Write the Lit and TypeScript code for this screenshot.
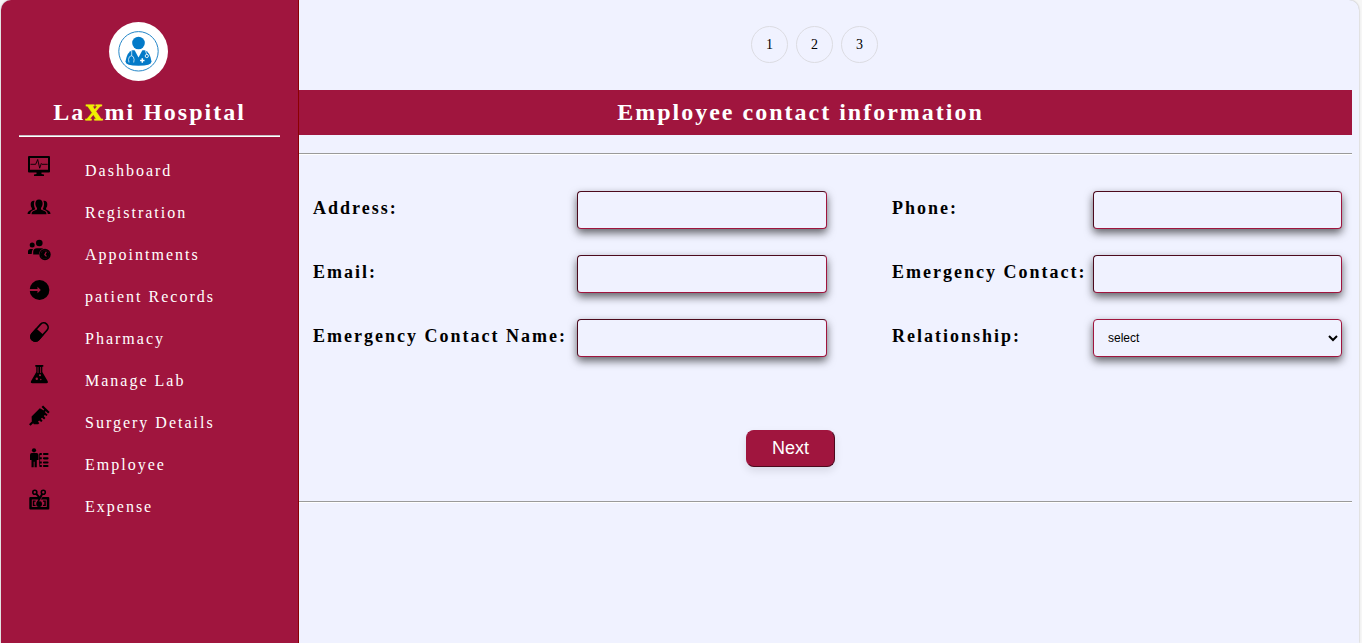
import { LitElement, html, svg, css } from "lit";
import { customElement, property } from "lit/decorators.js";

const icons: Record<string, unknown> = {
  dashboard: svg`<path fill-rule="evenodd" d="M2 2h20q1 0 1 1v14.500q0 1-1 1H2q-1 0-1-1V3q0-1 1-1zM3 4v11.800h18V4z"/><path d="M9.500 18h5v2l2.500.5V22H7v-1.500l2.500-.5z"/><path d="M3.500 10.300h5.200l2-4.800 2 8.700 1.600-4.700.8.800h5.600" fill="none" stroke="#000" stroke-width=".9"/>`,
  registration: svg`<path d="M12 3.500c2.600 0 3.800 1.800 3.600 4.500-.1 1.700-1 3.200-1.600 4v1.600l4 1.700q1.500.7 1.500 2.900h-15q0-2.200 1.500-2.900l4-1.700V12c-.6-.8-1.500-2.300-1.600-4C8.200 5.300 9.400 3.500 12 3.500z"/><path d="M7.600 4.800C5 4.400 3.500 6 3.700 8.600c.1 1.500.2 2.400 1.200 3.500v1.400L2 15q-1.500.8-1.500 3h2.700q.2-2.600 1.800-3.300l3.300-1.500C7.200 11 6.200 7.800 7.600 4.800zM16.400 4.800c2.600-.4 4.100 1.200 3.900 3.800-.1 1.500-.2 2.400-1.200 3.500v1.400L22 15q1.500.8 1.500 3h-2.700q-.2-2.600-1.800-3.300l-3.300-1.500c1.100-2.200 2.100-5.400.7-8.400z"/>`,
  appointments: svg`<circle cx="12.300" cy="5" r="3.300"/><circle cx="5.200" cy="7" r="2.500"/><path d="M1 16v-2.200Q1 11 3.600 11H6q-1.500 2-1.300 5zM6.200 16.500V14q0-3.800 3.800-3.800h4.500q1.200 0 2 .5-4.500 1.300-4.500 5.800z"/><circle cx="18" cy="16.500" r="4.900" fill="none" stroke="#000" stroke-width="1.600"/><circle cx="18" cy="16.500" r="4.300"/><path d="M19.300 13.800l-1.500 2.900 1.700 1.700" fill="none" stroke="#a0153e" stroke-width="1.200"/>`,
  records: svg`<g transform="translate(0 -2)"><circle cx="12.500" cy="12" r="9.900"/><path d="M2 11h8.500V8.700L13.800 12l-3.300 3.300V13H2z" fill="#a0153e"/></g>`,
  pharmacy: svg`<g transform="translate(.5 -2) rotate(42 12 12)"><rect x="7.600" y="1.300" width="8.800" height="21.400" rx="4.400" fill="none" stroke="#000" stroke-width="1.700"/><path d="M6.800 11.500h10.400v6.800a5.200 5.200 0 0 1-10.400 0z"/></g>`,
  lab: svg`<g transform="translate(.3 -2)"><path d="M8 3h8v1.700h-1V10l5.300 9q1 2.200-1.200 2.200H5q-2.200 0-1.200-2.200L9 10V4.700H8z"/><path d="M10.700 5v6M13.300 5v6" stroke="#a0153e" stroke-width=".8"/><circle cx="12.700" cy="13.300" r="1" fill="#a0153e"/><circle cx="9.500" cy="16.800" r="1.200" fill="#a0153e"/><circle cx="13.500" cy="17.500" r=".7" fill="#a0153e"/></g>`,
  surgery: svg`<g transform="translate(.3 -2.500)"><path d="M4.500 17.500L4.300 13l8.200-8.200 2.800 1.400 5 5-1 1.400-1.700-1-1.200 1 1.700 2-1.300 1.300-2-1.600-1.200 1 1.700 2-1.400 1.200-2-1.500-1.200 1 1.300 1.800-1.200 1H6.500z"/><path d="M6.500 17.500l-4 4M15.500 9l3.300-3.300M15 2.700l6.600 6.600" stroke="#000" stroke-width="2.200"/></g>`,
  employee: svg`<g transform="translate(0 -2.500)"><circle cx="7" cy="4.800" r="2.100"/><path d="M4.800 7.500h4.700q2 0 2 2v5H9.800v7.200H7.600v-5.500h-.9v5.500H4.500v-7.200H3V9.500q0-2 1.800-2z"/><path d="M12.500 8.500h2.300M12.500 12.800h2.300M12.500 17h2.300M12.500 20.500h2.300" stroke="#000" stroke-width="2"/><path d="M17 8.500h3.500M17 12.800h3.500M17 17h3.500M17 20.500h3.500" stroke="#000" stroke-width="2.200" stroke-linecap="round"/><path d="M12.600 8.500V20" stroke="#000" stroke-width=".8"/></g>`,
  expense: svg`<g transform="translate(.3 -3)"><path fill-rule="evenodd" d="M3 10h18q1 0 1 1v10.500q0 1-1 1H3q-1 0-1-1V11q0-1 1-1zM4.500 12.400v7.700h15v-7.700z"/><path d="M5.500 13.500h2.800v1.200H7v3h1.300v1.200H5.500zM18.500 13.500h-2.800v1.200H17v3h-1.300v1.200h2.800z"/><circle cx="11.800" cy="17" r="2.900"/><circle cx="7.500" cy="5.200" r="2" fill="none" stroke="#000" stroke-width="1.600"/><circle cx="16" cy="5.200" r="2" fill="none" stroke="#000" stroke-width="1.600"/><path d="M14.800 7l-4.500 9M9 6.800l3 3.500" stroke="#000" stroke-width="2"/><path d="M14.800 10L12 14.500" stroke="#a0153e" stroke-width=".7"/></g>`,
};

@customElement("app-sidebar")
class AppSidebar extends LitElement {
  static styles = css`
    :host {
      display: block;
      flex: none;
      box-sizing: border-box;
      width: 298px;
      padding: 21px 18px 0;
      background: #a0153e;
      border-right: 1px solid #8b0000;
      border-radius: 10px 0 0 0;
      color: #fff;
    }
    .logo {
      display: block;
      width: 60px;
      height: 60px;
      margin: 0 0 0 89px;
    }
    .brand {
      margin: 17px 0 9px;
      font-size: 24px;
      line-height: 28px;
      letter-spacing: 2px;
      text-align: center;
    }
    .accent { color: #f0f000; -webkit-text-stroke: 1px #f0f000; }
    .rule { margin: 0; border: solid; border-width: 1px 0; border-color: #c9c0c4 transparent #fff; }
    .menu {
      display: grid;
      gap: 18px;
      margin: 17px 0 0;
      padding: 0 0 0 8px;
      list-style: none;
    }
    .link {
      display: flex;
      gap: 34px;
      height: 24px;
      color: #fff;
      font-size: 16px;
      line-height: 34px;
      letter-spacing: 2px;
      text-decoration: none;
    }
    .icon { width: 24px; height: 24px; }
  `;

  items = [
    ["dashboard", "Dashboard"],
    ["registration", "Registration"],
    ["appointments", "Appointments"],
    ["records", "patient Records"],
    ["pharmacy", "Pharmacy"],
    ["lab", "Manage Lab"],
    ["surgery", "Surgery Details"],
    ["employee", "Employee"],
    ["expense", "Expense"],
  ];

  render() {
    return html`
      <svg class="logo" viewBox="0 0 60 60" aria-hidden="true">
        <circle cx="30.500" cy="30.500" r="29.500" fill="#fff" />
        <circle cx="30.500" cy="30.300" r="19.700" fill="none" stroke="#2486c8" stroke-width="1" />
        <circle cx="30.500" cy="22" r="6.300" fill="#037ac8" />
        <path fill="#037ac8" d="M24.500 29.300h12q5.500 1.500 7 11.200 0 4.300-13 4.300t-13-4.300q1.500-9.700 7-11.200z" />
        <path fill="#fff" d="M26.500 29h8l-4 7.500z" />
        <path fill="none" stroke="#fff" stroke-width=".7" d="M23.700 30v5M21 41.500l-.5-3q.3-3.500 2.800-3.700 2.700.2 2.800 3.700l-.4 3M37.500 30l1.300 3.500" />
        <circle cx="38.800" cy="35" r="1.600" fill="none" stroke="#fff" stroke-width=".9" />
        <path d="M34.300 37.300v4.400M32.100 39.500h4.400" stroke="#fff" stroke-width="1.500" />
      </svg>
      <h1 class="brand">La<span class="accent">X</span>mi Hospital</h1>
      <hr class="rule" />
      <nav aria-label="Main">
        <ul class="menu">
          ${this.items.map(
            ([icon, label]) => html`<li>
              <a class="link" href="#${icon}">
                <svg class="icon" viewBox="0 0 24 24" overflow="visible" aria-hidden="true">${icons[icon]}</svg>
                <span>${label}</span>
              </a>
            </li>`
          )}
        </ul>
      </nav>
    `;
  }
}

@customElement("step-list")
class StepList extends LitElement {
  static styles = css`
    :host { display: block; }
    .steps {
      display: flex;
      justify-content: center;
      gap: 8px;
      margin: 0;
      padding: 0 22px 0 0;
      list-style: none;
    }
    .step {
      box-sizing: border-box;
      width: 37px;
      height: 37px;
      border: 1px solid #dcdce2;
      border-radius: 50%;
      font-size: 14px;
      line-height: 35px;
      text-align: center;
    }
  `;

  @property({ type: Number }) count = 3;

  render() {
    return html`<ol class="steps">
      ${Array.from({ length: this.count }, (_, i) => html`<li class="step">${i + 1}</li>`)}
    </ol>`;
  }
}

@customElement("contact-form")
class ContactForm extends LitElement {
  static styles = css`
    :host { display: block; }
    .fields {
      display: grid;
      grid-template-columns: 264fr 250fr 65fr 201fr 249fr;
      row-gap: 26px;
      align-items: center;
      padding: 36px 10px 73px 14px;
    }
    .label {
      font-size: 18px;
      font-weight: bold;
      line-height: 20px;
      letter-spacing: 2px;
      white-space: nowrap;
      padding-bottom: 4px;
    }
    .second { grid-column: 4; }
    .control {
      box-sizing: border-box;
      width: 100%;
      height: 38px;
      margin: 0;
      padding: 0 10px;
      border: 1px solid #a0153e;
      border-radius: 4px;
      background: #f0f2ff;
      box-shadow: 0 4px 8px rgba(0, 0, 0, 0.6);
      color: #000;
      font: 12px "Liberation Sans", Arial, sans-serif;
    }
    .text { border-color: #4c0a1d #a0153e #a0153e #4c0a1d; }
    .actions { display: flex; justify-content: center; padding: 0 70px 34px 0; }
    .next {
      height: 37px;
      padding: 0 25px;
      border: 1px outset #a0153e;
      border-radius: 8px;
      background: #a0153e;
      box-shadow: 0 4px 8px rgba(0, 0, 0, 0.1);
      color: #fff;
      font: 18px "Liberation Sans", Arial, sans-serif;
    }
  `;

  render() {
    return html`<form @submit=${(e: Event) => e.preventDefault()}>
      <div class="fields">
        <label class="label" for="address">Address:</label>
        <input class="control text" id="address" type="text" />
        <label class="label second" for="phone">Phone:</label>
        <input class="control text" id="phone" type="tel" />
        <label class="label" for="email">Email:</label>
        <input class="control text" id="email" type="email" />
        <label class="label second" for="emergency">Emergency Contact:</label>
        <input class="control text" id="emergency" type="tel" />
        <label class="label" for="contact-name">Emergency Contact Name:</label>
        <input class="control text" id="contact-name" type="text" />
        <label class="label second" for="relationship">Relationship:</label>
        <select class="control" id="relationship">
          <option>select</option>
        </select>
      </div>
      <div class="actions"><button class="next" type="submit">Next</button></div>
    </form>`;
  }
}

@customElement("app-root")
class AppRoot extends LitElement {
  static styles = css`
    :host {
      display: block;
      background: #f6f6f6;
      color: #000;
      font-family: "Liberation Serif", "Times New Roman", serif;
    }
    .page {
      display: flex;
      min-height: 100vh;
      margin: 0 3px 0 1px;
      border-radius: 10px 10px 0 0;
      background: #f0f2ff;
      box-shadow: 0 0 2px rgba(0, 0, 0, 0.3);
    }
    .main { flex: 1; min-width: 0; padding: 26px 7px 0 0; }
    .title {
      margin: 27px 0 18px;
      padding: 0 50px 0 0;
      background: #a0153e;
      color: #fff;
      font-size: 24px;
      line-height: 45px;
      letter-spacing: 2px;
      text-align: center;
    }
    .rule { margin: 0; border: solid; border-width: 1px 0; border-color: #9a9a9a transparent #fff; }
  `;

  render() {
    return html`<div class="page">
      <app-sidebar></app-sidebar>
      <main class="main">
        <step-list .count=${3}></step-list>
        <h2 class="title">Employee contact information</h2>
        <hr class="rule" />
        <contact-form></contact-form>
        <hr class="rule" />
      </main>
    </div>`;
  }
}
